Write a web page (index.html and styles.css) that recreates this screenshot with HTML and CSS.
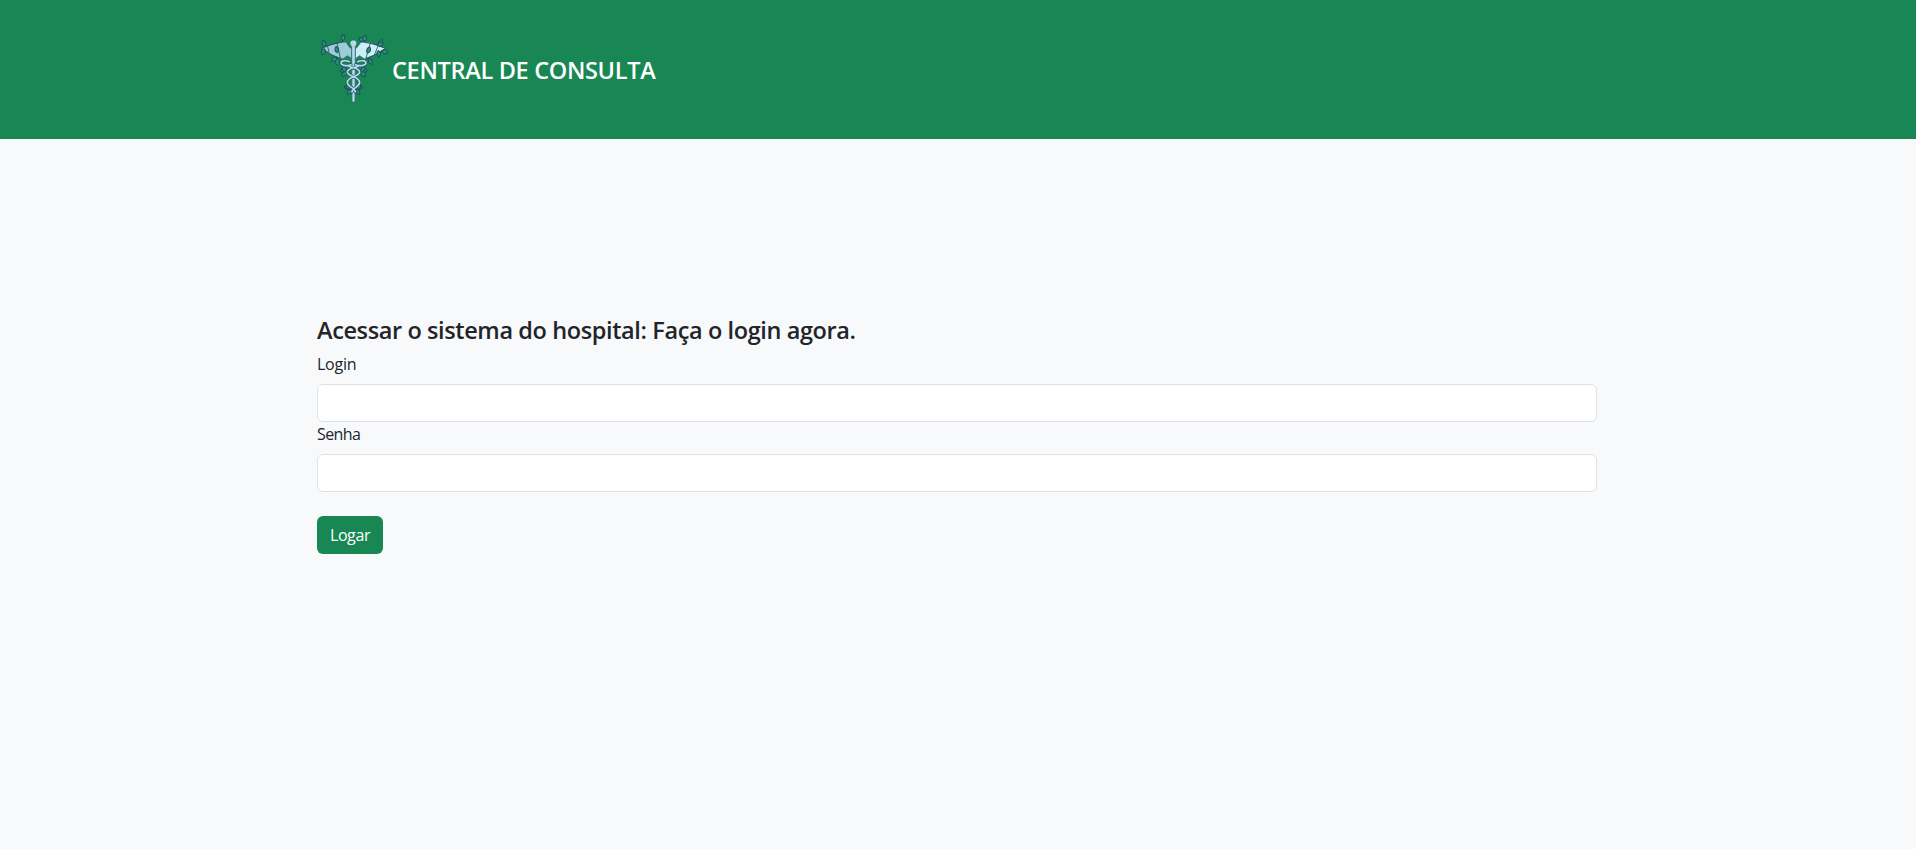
FILE: index.html
```html
<!DOCTYPE html>
<html lang="pt-BR">
<head>
<meta charset="utf-8">
<title>Central de Consulta</title>
<link rel="stylesheet" href="styles.css">
</head>
<body>
<header class="topbar">
  <div class="container brand">
    <svg class="logo" viewBox="21 36 216 216" aria-hidden="true">
      <defs>
        <path id="leaf" d="M0 0C-8-4-8-13 0-19C7-13 7-4 0 0Z"/>
      </defs>
      <g class="wings">
        <path class="wing-left" d="M34 85L62 75L91 67L108 66L117 80L125 87L125 116L113 107L98 117L65 105Z"/>
        <path class="wing-right" d="M227 85L198 75L178 67L153 66L143 80L136 87L136 116L149 107L163 117L194 105Z"/>
      </g>
      <path class="vine" d="M33 85L62 74L97 66L102 56M53 80L57 97M81 69L91 114M35 85L66 105L91 116M227 85L198 74L164 67L158 57M204 79L193 105M181 69L168 114L179 122M225 86L194 105L169 116"/>
      <g class="leaves">
        <use href="#leaf" transform="translate(46 79) rotate(-22)"/>
        <use href="#leaf" transform="translate(43 86) rotate(200)"/>
        <use href="#leaf" transform="translate(98 62) rotate(10)"/>
        <use href="#leaf" transform="translate(80 112) rotate(235)"/>
        <use href="#leaf" transform="translate(82 117) rotate(180)"/>
        <use href="#leaf" transform="translate(83 98) rotate(-15)"/>
        <use href="#leaf" transform="translate(163 64) rotate(-55)"/>
        <use href="#leaf" transform="translate(161 64) rotate(20)"/>
        <use href="#leaf" transform="translate(208 76) rotate(25)"/>
        <use href="#leaf" transform="translate(203 77) rotate(65)"/>
        <use href="#leaf" transform="translate(216 94) rotate(100)"/>
        <use href="#leaf" transform="translate(205 92) rotate(175)"/>
        <use href="#leaf" transform="translate(177 116) rotate(155)"/>
        <use href="#leaf" transform="translate(173 99) rotate(20)"/>
        <use href="#leaf" transform="translate(109 154) rotate(-80)"/>
        <use href="#leaf" transform="translate(108 155) rotate(-35)"/>
        <use href="#leaf" transform="translate(109 156) rotate(225)"/>
        <use href="#leaf" transform="translate(153 154) rotate(80)"/>
        <use href="#leaf" transform="translate(154 155) rotate(35)"/>
        <use href="#leaf" transform="translate(153 156) rotate(135)"/>
        <use href="#leaf" transform="translate(122 204) rotate(-80)"/>
        <use href="#leaf" transform="translate(122 207) rotate(-45)"/>
        <use href="#leaf" transform="translate(125 209) rotate(225)"/>
        <use href="#leaf" transform="translate(139 204) rotate(80)"/>
        <use href="#leaf" transform="translate(139 207) rotate(45)"/>
        <use href="#leaf" transform="translate(136 209) rotate(135)"/>
      </g>
      <path class="staff" d="M125 79C117 73 119 60 130 60C142 60 143 73 136 79L135 242L130 249L126 242Z"/>
      <path class="snake-edge" d="M123 134C110 139 90 137 94 126C98 120 112 122 118 125M137 134C151 139 171 137 167 126C163 120 149 122 143 125M148 136C139 144 113 143 112 156C112 169 149 171 149 187C149 202 126 202 126 216M113 136C122 144 148 143 149 156C149 169 112 171 112 187C112 202 136 202 136 216"/>
      <path class="snake" d="M123 134C110 139 90 137 94 126C98 120 112 122 118 125M137 134C151 139 171 137 167 126C163 120 149 122 143 125M148 136C139 144 113 143 112 156C112 169 149 171 149 187C149 202 126 202 126 216M113 136C122 144 148 143 149 156C149 169 112 171 112 187C112 202 136 202 136 216"/>
    </svg>
    <span class="brand-name">CENTRAL DE CONSULTA</span>
  </div>
</header>
<main class="container login">
  <h1 class="title">Acessar o sistema do hospital: Faça o login agora.</h1>
  <form>
    <label class="label label-login" for="login">Login</label>
    <input class="field" id="login" type="text">
    <label class="label label-senha" for="senha">Senha</label>
    <input class="field" id="senha" type="password">
    <button class="submit" type="button">Logar</button>
  </form>
</main>
</body>
</html>
```
FILE: styles.css
```css
* { box-sizing: border-box; }
body {
  margin: 0;
  min-height: 100vh;
  background: #f8f9fb;
  color: #212529;
  font: 400 16px/24px "Segoe UI", "Open Sans", "Noto Sans", sans-serif;
}
.container { width: 1282px; margin: 0 auto; padding-right: 2px; }
.topbar { height: 139px; background: #198754; }
.brand { display: flex; padding-top: 32px; }
.logo { width: 72px; height: 72px; margin-right: 3px; flex: none; overflow: visible; }
.brand-name {
  margin-top: 20px;
  color: #fff;
  font-size: 23.5px;
  line-height: 36px;
  font-weight: 600;
  letter-spacing: -0.31px;
  white-space: nowrap;
}
.wing-left { fill: #9dccd9; stroke: #245c60; stroke-width: 2; }
.wing-right { fill: #cceef7; stroke: #245c60; stroke-width: 2; }
.vine { fill: none; stroke: #20505a; stroke-width: 2.5; }
.leaves { fill: #299183; stroke: #1d5158; stroke-width: 3; }
.staff { fill: #b3dbe8; stroke: #2b5d69; stroke-width: 2; }
.snake-edge { fill: none; stroke: #285866; stroke-width: 9; stroke-linecap: round; }
.snake { fill: none; stroke: #b5dce9; stroke-width: 5; stroke-linecap: round; }
.login { padding-top: 177px; }
.title {
  margin: 0 0 7px;
  font-size: 23.5px;
  line-height: 29px;
  font-weight: 600;
  letter-spacing: -0.39px;
  white-space: nowrap;
}
.label { display: block; padding: 0 0 8px; }
.label-login { letter-spacing: -0.25px; }
.label-senha { letter-spacing: -0.6px; }
.field {
  display: block;
  width: 100%;
  height: 38px;
  padding: 6px 12px;
  border: 1px solid #dee2e6;
  border-radius: 6px;
  background: #fff;
  font: inherit;
}
.submit {
  display: block;
  width: 66px;
  height: 38px;
  margin-top: 24px;
  padding: 0;
  border: 0;
  border-radius: 6px;
  background: #198754;
  color: #fff;
  font: inherit;
  letter-spacing: -0.4px;
}
```
